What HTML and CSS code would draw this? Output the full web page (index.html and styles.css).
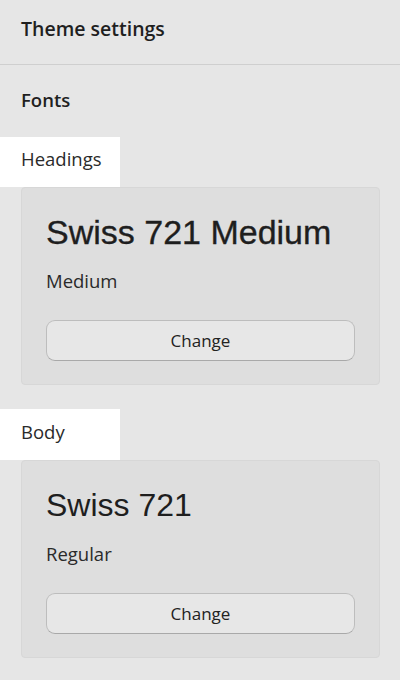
FILE: index.html
```html
<!DOCTYPE html>
<html lang="en">
<head>
<meta charset="utf-8">
<title>Theme settings</title>
<link rel="stylesheet" href="styles.css">
</head>
<body>
  <header class="top-bar">
    <h1 class="top-title">Theme settings</h1>
  </header>
  <main class="panel">
    <h2 class="section-title">Fonts</h2>

    <div class="label-tab">Headings</div>
    <section class="font-card">
      <div class="font-name font-name--medium">Swiss 721 Medium</div>
      <div class="font-style">Medium</div>
      <button class="change-btn" type="button">Change</button>
    </section>

    <div class="label-tab label-tab--body">Body</div>
    <section class="font-card">
      <div class="font-name">Swiss 721</div>
      <div class="font-style">Regular</div>
      <button class="change-btn" type="button">Change</button>
    </section>
  </main>
</body>
</html>
```

FILE: styles.css
```css
* { box-sizing: border-box; }

html, body {
  margin: 0;
  padding: 0;
  background: #e6e6e6;
}

body {
  width: 400px;
  min-height: 680px;
  font-family: "Open Sans", "Noto Sans", sans-serif;
  color: #222222;
}

.top-bar {
  padding: 17px 21px 23px;
  border-bottom: 1px solid #cfcfcf;
}

.top-title {
  margin: 0;
  font-size: 19.5px;
  line-height: 24px;
  font-weight: 600;
  color: #1f1f1f;
}

.panel {
  display: flex;
  flex-direction: column;
  padding: 23px 20px 20px 0;
}

.section-title {
  margin: 0 0 25px 21px;
  font-size: 18.5px;
  line-height: 24px;
  font-weight: 600;
  color: #1f1f1f;
}

.label-tab {
  width: 120px;
  height: 50px;
  padding: 10px 0 0 21px;
  background: #ffffff;
  font-size: 18.5px;
  line-height: 24px;
  color: #2a2a2a;
}

.label-tab--body {
  margin-top: 24px;
  height: 51px;
  padding-top: 11px;
}

.font-card {
  margin-left: 21px;
  padding: 24px 24px 23px;
  background: #dedede;
  border: 1px solid #d7d7d7;
  border-radius: 4px;
  display: flex;
  flex-direction: column;
}

.font-name {
  font-family: "Liberation Sans", Arial, sans-serif;
  font-size: 32px;
  line-height: 40px;
  color: #1e1e1e;
}

.font-name--medium {
  font-size: 34px;
  -webkit-text-stroke: 0.35px #1e1e1e;
}

.font-style {
  margin-top: 17px;
  font-size: 18.5px;
  line-height: 24px;
  color: #2a2a2a;
}

.change-btn {
  margin-top: 27px;
  height: 41px;
  width: 100%;
  border: 1px solid #bdbdbd;
  border-bottom-color: #a9a9a9;
  border-radius: 9px;
  background: #e7e7e7;
  font-family: "Open Sans", "Noto Sans", sans-serif;
  font-size: 17px;
  color: #222222;
  padding: 0;
}
```
